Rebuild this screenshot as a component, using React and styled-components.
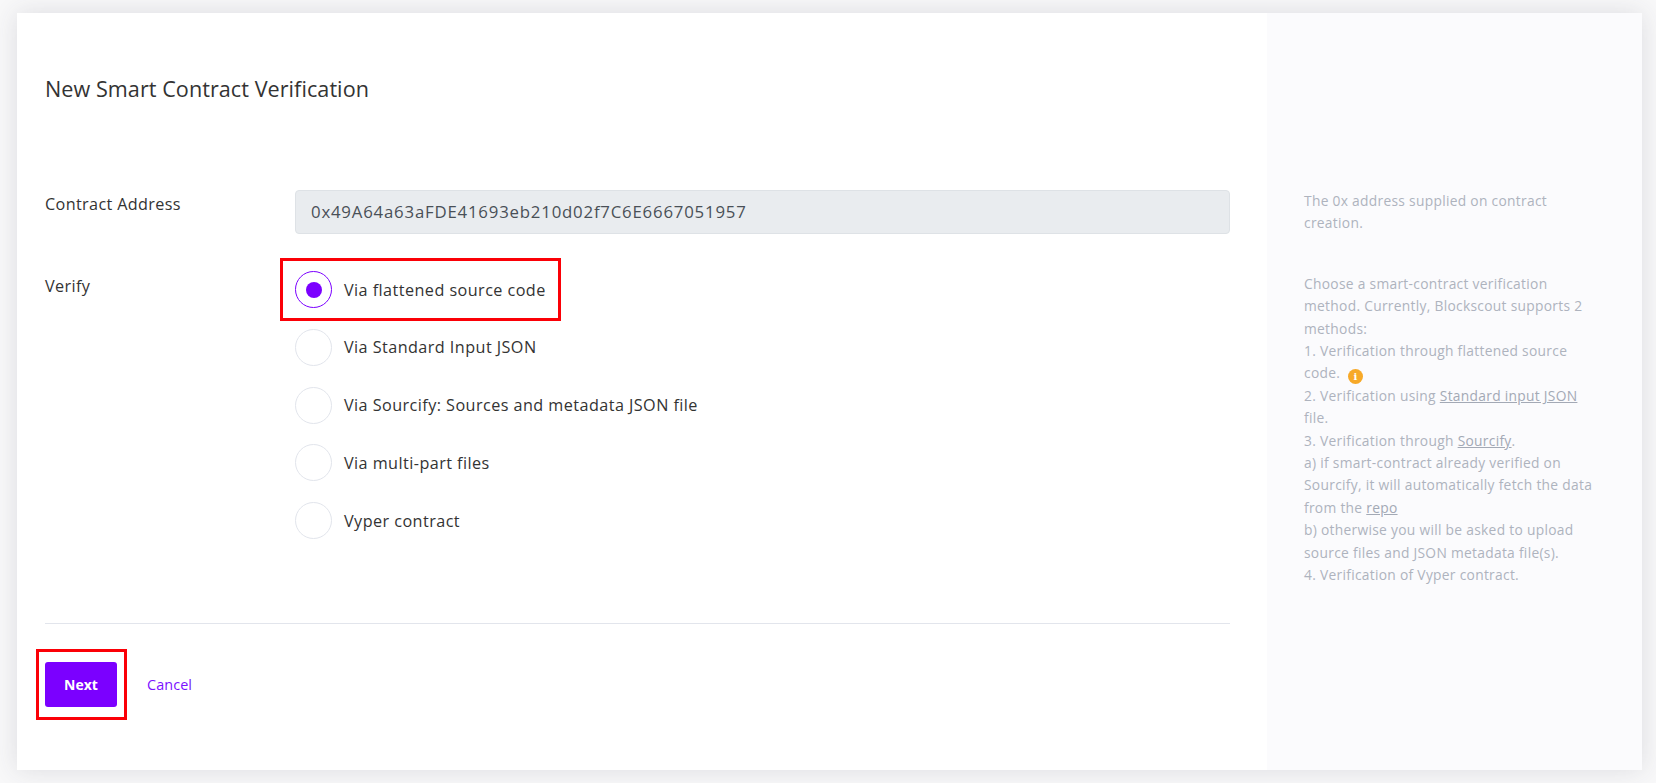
import React from "react";
import styled, { createGlobalStyle } from "styled-components";

const FONT = `"Open Sans", "Noto Sans", sans-serif`;

const Global = createGlobalStyle`
  html, body { margin: 0; padding: 0; background: #f8f8f9; }
  body { font-family: ${FONT}; color: #333; }
  * { box-sizing: border-box; }
`;
const Page = styled.div`
  width: 1656px; height: 783px; padding: 13px 14px 13px 17px; overflow: hidden;
`;
const Card = styled.div`
  display: flex; width: 1625px; height: 757px; background: #fff;
  box-shadow: 0 0 24px rgba(60, 60, 75, 0.14);
`;
const Main = styled.div`
  width: 1250px; padding: 63px 37px 0 28px; display: flex; flex-direction: column;
`;
const Title = styled.h1`
  margin: 0; font-size: 21.6px; line-height: 26px; font-weight: 400; color: #333; letter-spacing: 0.05px;
`;
const Row = styled.div`
  display: flex; margin-top: ${(p) => p.$top}px;
`;
const Label = styled.div`
  width: 250px; font-size: 16.2px; letter-spacing: 0.36px; line-height: 24px; color: #333; padding-top: ${(p) => p.$pad}px;
`;
const Input = styled.div`
  width: 935px; height: 44px; display: flex; align-items: center; padding: 0 15px 2px;
  background: #e9ecef; border: 1px solid #dee2e6; border-radius: 4px;
  font-size: 16.8px; color: #495057; letter-spacing: 0.8px;
`;
const Options = styled.div`
  display: flex; flex-direction: column; gap: 20.8px;
`;
const Option = styled.div`
  position: relative; display: flex; align-items: center; gap: 12px; height: 37px;
  font-size: 16.2px; letter-spacing: 0.44px; color: #333;
`;
const Radio = styled.span`
  width: 37px; height: 37px; border-radius: 50%; display: flex; align-items: center; justify-content: center;
  border: 1px solid ${(p) => (p.$on ? "#7b00ff" : "#e2e5ec")}; background: #fff;
  &::after { content: ""; width: 16px; height: 16px; border-radius: 50%; background: ${(p) => (p.$on ? "#7b00ff" : "transparent")}; }
`;
const RedBox = styled.span`
  position: absolute; border: 3px solid #fb0007; pointer-events: none;
  left: ${(p) => p.$l}px; top: ${(p) => p.$t}px; width: ${(p) => p.$w}px; height: ${(p) => p.$h}px;
`;
const Divider = styled.hr`
  width: 1185px; margin: 84px 0 0; border: 0; border-top: 1px solid #e2e5ec;
`;
const Actions = styled.div`
  display: flex; align-items: center; gap: 30px; margin-top: 38px;
`;
const Next = styled.button`
  position: relative; width: 72px; height: 45px; border: 0; border-radius: 3px; background: #7b00ff; color: #fff;
  font: 700 14px ${FONT}; padding: 0;
`;
const Cancel = styled.a`
  font-size: 14.4px; letter-spacing: 0.1px; color: #7b10ff;
`;
const Side = styled.aside`
  width: 375px; background: #fbfbfd; padding: 177px 30px 0 37px; font-size: 13.8px; letter-spacing: 0.29px; line-height: 22.4px; color: #aeb3be;
`;
const Note = styled.p`
  margin: 0 0 38px;
`;
const Help = styled.a`
  color: #a3a9b5; text-decoration: underline;
`;
const Info = styled.span`
  display: inline-flex; vertical-align: -2px; margin-left: 4px; width: 15px; height: 15px; border-radius: 50%;
  background: #f7a928; color: #fff; font: 700 10px/15px "DejaVu Serif", serif; justify-content: center;
`;

const methods = ["Via Standard Input JSON", "Via Sourcify: Sources and metadata JSON file", "Via multi-part files", "Vyper contract"];

export default function App() {
  return (
    <Page>
      <Global />
      <Card>
        <Main>
          <Title>New Smart Contract Verification</Title>
          <Row $top={88}>
            <Label $pad={2}>Contract Address</Label>
            <Input>0x49A64a63aFDE41693eb210d02f7C6E6667051957</Input>
          </Row>
          <Row $top={37}>
            <Label $pad={3}>Verify</Label>
            <Options>
              <Option>
                <Radio $on />
                Via flattened source code
                <RedBox $l={-15} $t={-13} $w={281} $h={63} />
              </Option>
              {methods.map((m) => (
                <Option key={m}>
                  <Radio />
                  {m}
                </Option>
              ))}
            </Options>
          </Row>
          <Divider />
          <Actions>
            <Next>
              Next
              <RedBox $l={-9} $t={-13} $w={91} $h={71} />
            </Next>
            <Cancel>Cancel</Cancel>
          </Actions>
        </Main>
        <Side>
          <Note>The 0x address supplied on contract<br />creation.</Note>
          <Note>
            Choose a smart-contract verification<br />
            method. Currently, Blockscout supports 2<br />
            methods:
            <br />
            1. Verification through flattened source<br />
            code. <Info>i</Info>
            <br />
            2. Verification using <Help>Standard input JSON</Help><br />
            file.
            <br />
            3. Verification through <Help>Sourcify</Help>.
            <br />
            a) if smart-contract already verified on<br />
            Sourcify, it will automatically fetch the data<br />
            from the <Help>repo</Help>
            <br />
            b) otherwise you will be asked to upload<br />
            source files and JSON metadata file(s).
            <br />
            4. Verification of Vyper contract.
          </Note>
        </Side>
      </Card>
    </Page>
  );
}
